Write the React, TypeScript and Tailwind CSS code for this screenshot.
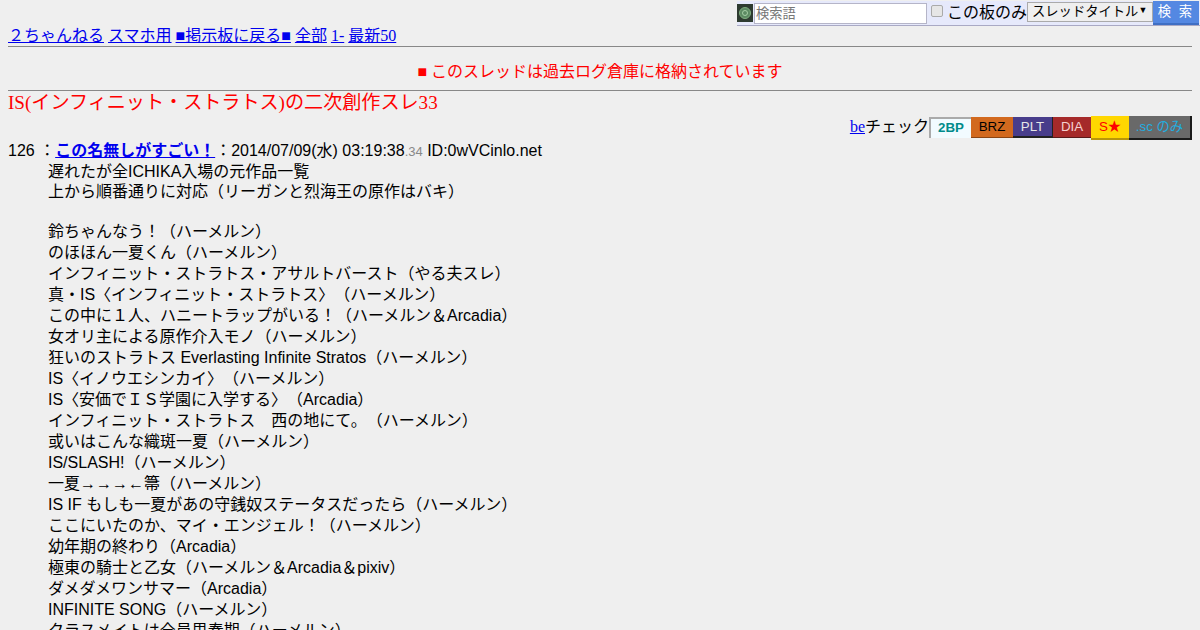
const lines = [
	"遅れたが全ICHIKA入場の元作品一覧",
	"上から順番通りに対応（リーガンと烈海王の原作はバキ）",
	"",
	"鈴ちゃんなう！（ハーメルン）",
	"のほほん一夏くん（ハーメルン）",
	"インフィニット・ストラトス・アサルトバースト（やる夫スレ）",
	"真・IS〈インフィニット・ストラトス〉（ハーメルン）",
	"この中に１人、ハニートラップがいる！（ハーメルン＆Arcadia）",
	"女オリ主による原作介入モノ（ハーメルン）",
	"狂いのストラトス Everlasting Infinite Stratos（ハーメルン）",
	"IS〈イノウエシンカイ〉（ハーメルン）",
	"IS〈安価でＩＳ学園に入学する〉（Arcadia）",
	"インフィニット・ストラトス　西の地にて。（ハーメルン）",
	"或いはこんな織斑一夏（ハーメルン）",
	"IS/SLASH!（ハーメルン）",
	"一夏→→→←箒（ハーメルン）",
	"IS IF もしも一夏があの守銭奴ステータスだったら（ハーメルン）",
	"ここにいたのか、マイ・エンジェル！（ハーメルン）",
	"幼年期の終わり（Arcadia）",
	"極東の騎士と乙女（ハーメルン＆Arcadia＆pixiv）",
	"ダメダメワンサマー（Arcadia）",
	"INFINITE SONG（ハーメルン）",
	"クラスメイトは全員思春期（ハーメルン）",
];

const sans = "font-['Liberation_Sans','Noto_Sans_CJK_JP',sans-serif]";
const serif = "font-['Liberation_Serif','Noto_Sans_CJK_JP',serif]";

const App: React.FC = () => {
	return (
		<div className={`bg-[#efefef] h-[630px] w-[1200px] overflow-hidden text-black [text-spacing-trim:space-all] ${serif}`}>
			<div className="flex justify-end pt-[1px]">
				<div className={`flex items-center h-[25px] w-[463px] bg-[#e6e9fb] border-b border-[#a9a9c4] ${sans}`}>
					<div className="w-[16px] h-[18px] bg-[#2e3b30] flex items-center justify-center">
						<div className="w-[12px] h-[12px] rounded-full border border-[#7fae7f] bg-[#5c8a62] flex items-center justify-center">
							<div className="w-[6px] h-[6px] rounded-full border border-[#a6cfa6]"></div>
						</div>
					</div>
					<div className="w-[173px] h-[21px] bg-white border border-[#b5b5c8] ml-[1px] pl-[1px] text-[13.3px] leading-[19px] text-[#777]">
						検索語
					</div>
					<div className="w-[12px] h-[12px] ml-[4px] mb-[4px] rounded-[2px] border border-[#aaa] bg-[#e6e6e6]"></div>
					<span className="ml-[4px] text-[16px] whitespace-nowrap">この板のみ</span>
					<div className="w-[126px] h-[20px] mb-[2px] bg-[#efefef] border border-[#aaa] pl-[4px] text-[13.3px] leading-[18px] flex items-center justify-between pr-[5px] whitespace-nowrap">
						<span>スレッドタイトル</span>
						<span className="text-[9px] mb-[4px]">▼</span>
					</div>
					<div className="w-[46px] h-[24px] mb-[1px] bg-[#5488e2] border-b-2 border-[#3f6fc4] text-white text-[13.3px] flex items-center justify-center tracking-[2px]">
						検 索
					</div>
				</div>
			</div>

			<div className="px-[8px]">
				<div className="text-[16px] leading-[20px] whitespace-nowrap">
					<a href="#" className="text-[#0000ee] underline">２ちゃんねる</a>{" "}
					<a href="#" className="text-[#0000ee] underline">スマホ用</a>{" "}
					<a href="#" className="text-[#0000ee] underline">■掲示板に戻る■</a>{" "}
					<a href="#" className="text-[#0000ee] underline">全部</a>{" "}
					<a href="#" className="text-[#0000ee] underline">1-</a>{" "}
					<a href="#" className="text-[#0000ee] underline">最新50</a>
				</div>
				<hr className="border-t border-[#888]" />
				<div className="text-center text-[16px] text-[#ff0000] leading-[20px] mt-[15px] mb-[8px]">
					■ このスレッドは過去ログ倉庫に格納されています
				</div>
				<hr className="border-t border-[#888]" />
				<h1 className="text-[19.1px] leading-[24px] text-[#ff0000] font-normal">
					IS(インフィニット・ストラトス)の二次創作スレ33
				</h1>
				<div className="flex justify-end items-start h-[25px] pt-[1px]">
					<div className="text-[16px] leading-[22px]">
						<a href="#" className="text-[#0000ee] underline">be</a>チェック
					</div>
					<div className={`flex items-start text-[13.3px] ${sans}`}>
						<div className="w-[42px] h-[21px] mt-[1px] bg-[#f2fbff] border-t-2 border-l-2 border-[#aaa] text-[#008b8b] font-bold text-center leading-[17px]">2BP</div>
						<div className="w-[42px] h-[21px] mt-[1px] bg-[#d2691e] text-black text-center border-b border-[#8b4513] leading-[20px]">BRZ</div>
						<div className="w-[40px] h-[21px] mt-[1px] bg-[#483d8b] text-[#e6e6e6] text-center border-b-2 border-r border-[#222] leading-[20px]">PLT</div>
						<div className="w-[38px] h-[21px] mt-[1px] bg-[#a52a2a] text-[#f5d0d0] text-center border-b border-[#5a1a1a] leading-[20px]">DIA</div>
						<div className="w-[38px] h-[24px] bg-[#ffd700] text-[#ff0000] text-center border-b-2 border-[#b8960a] leading-[22px]">S★</div>
						<div className="w-[63px] h-[24px] bg-[#696969] text-[#22aee0] text-center border-b-2 border-r-2 border-[#1a1a1a] leading-[22px]">.sc のみ</div>
					</div>
				</div>
				<div className={`text-[16px] leading-[21px] ${sans}`}>
					<div className="h-[21px] whitespace-nowrap">
						126 ：<a href="#" className="text-[#0000ee] underline font-bold">この名無しがすごい！</a>：2014/07/09(水) 03:19:38<span className="text-[13px] text-[#888]">.34</span> ID:0wVCinlo.net
					</div>
					<div className="pl-[40px]">
						{lines.map((line, index) => (
							<div key={index} className={index < 3 ? "h-[20px] whitespace-nowrap" : "h-[21px] whitespace-nowrap"}>
								{line}
							</div>
						))}
					</div>
				</div>
			</div>
		</div>
	);
};

export default App;
